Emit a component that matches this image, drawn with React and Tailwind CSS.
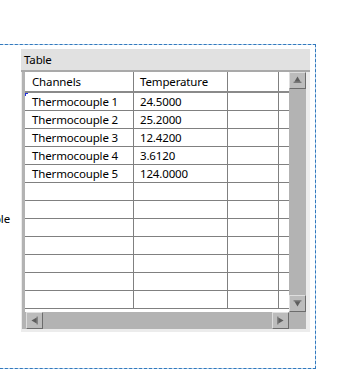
import React from "react";

const rows = [
  ["Thermocouple 1", "24.5000"],
  ["Thermocouple 2", "25.2000"],
  ["Thermocouple 3", "12.4200"],
  ["Thermocouple 4", "3.6120"],
  ["Thermocouple 5", "124.0000"],
  ["", ""],
  ["", ""],
  ["", ""],
  ["", ""],
  ["", ""],
  ["", ""],
  ["", ""],
];

// little scroll arrows, drawn like the LabVIEW ones
function Arrow({ dir }) {
  const shapes = {
    up: (
      <>
        <polygon points="8.5,4 5,10 12,10" />
        <rect x="4" y="10" width="9" height="1" />
      </>
    ),
    down: (
      <>
        <rect x="4" y="5" width="9" height="1" />
        <polygon points="5,6 12,6 8.5,12" />
      </>
    ),
    left: (
      <>
        <polygon points="5,8.5 11,5 11,12" />
        <rect x="11" y="4" width="1" height="9" />
      </>
    ),
    right: (
      <>
        <rect x="5" y="4" width="1" height="9" />
        <polygon points="6,5 12,8.5 6,12" />
      </>
    ),
  };
  return (
    <svg width="15" height="15" viewBox="0 0 17 17" fill="#5e5e5e">
      {shapes[dir]}
    </svg>
  );
}

function ScrollBtn({ dir }) {
  return (
    <div className="w-[17px] h-[17px] flex items-center justify-center bg-[#bcbcbc] border border-t-[#dedede] border-l-[#dedede] border-b-[#6c6c6c] border-r-[#6c6c6c]">
      <Arrow dir={dir} />
    </div>
  );
}

function Row({ a, b, first }) {
  return (
    <div className="flex h-[18px] shrink-0 border-b border-[#808080] bg-white">
      <div className="relative w-[109px] border-r border-[#808080] pl-[7px] flex items-center">
        {first && (
          <>
            <span className="absolute left-0 top-0 w-[3px] h-[1px] bg-[#1f2fe0]" />
            <span className="absolute left-0 top-0 w-[1px] h-[3px] bg-[#1f2fe0]" />
          </>
        )}
        {a}
      </div>
      <div className="w-[94px] border-r border-[#808080] pl-[6px] flex items-center">{b}</div>
      <div className="w-[51px] border-r border-[#808080]" />
      <div className="flex-1" />
    </div>
  );
}

export default function App() {
  return (
    <div
      className="relative w-[339px] h-[379px] overflow-hidden bg-white pt-[44px] text-[11.5px] tracking-[-0.15px] text-black"
      style={{ fontFamily: '"Noto Sans", "Open Sans", sans-serif' }}
    >
      {/* label of a control that sits off to the left */}
      <span className="absolute right-[329px] top-[211px] leading-[16px] whitespace-nowrap">Table</span>

      <div className="-ml-[10px] w-[326px] h-[325px] border border-dashed border-[#3279bd] bg-[#b9d5ef]">
        <div className="h-full bg-white pl-[30px] pt-[4px]">
          {/* table control */}
          <div className="w-[289px] h-[283px] flex flex-col bg-[#ececec]">
            <div className="h-[21px] bg-[#e1e1e1] pl-[3px] leading-[21px]">Table</div>
            <div className="flex-1 flex border-t-2 border-[#a9a9a9] pl-[1px] pr-[4px] pb-[3px]">
              <div className="flex border-l-[3px] border-[#b3b3b3]">
                <div className="flex flex-col">
                  {/* grid */}
                  <div className="w-[264px] h-[240px] overflow-hidden flex flex-col bg-white">
                    <div className="flex h-[21px] shrink-0 border-b-2 border-[#8a8a8a]">
                      <div className="w-[109px] border-r border-[#808080] pl-[7px] flex items-center">Channels</div>
                      <div className="w-[94px] border-r border-[#808080] pl-[6px] flex items-center">Temperature</div>
                      <div className="w-[51px] border-r border-[#808080]" />
                      <div className="flex-1" />
                    </div>
                    {rows.map(([a, b], i) => (
                      <Row key={i} a={a} b={b} first={i === 0} />
                    ))}
                  </div>
                  {/* horizontal scrollbar */}
                  <div className="flex h-[17px] bg-[#b3b3b3] pl-[1px]">
                    <ScrollBtn dir="left" />
                    <div className="flex-1" />
                    <ScrollBtn dir="right" />
                  </div>
                </div>
                {/* vertical scrollbar */}
                <div className="w-[17px] flex flex-col bg-[#b3b3b3]">
                  <ScrollBtn dir="up" />
                  <div className="flex-1" />
                  <ScrollBtn dir="down" />
                  <div className="h-[17px]" />
                </div>
              </div>
            </div>
          </div>
        </div>
      </div>
    </div>
  );
}
